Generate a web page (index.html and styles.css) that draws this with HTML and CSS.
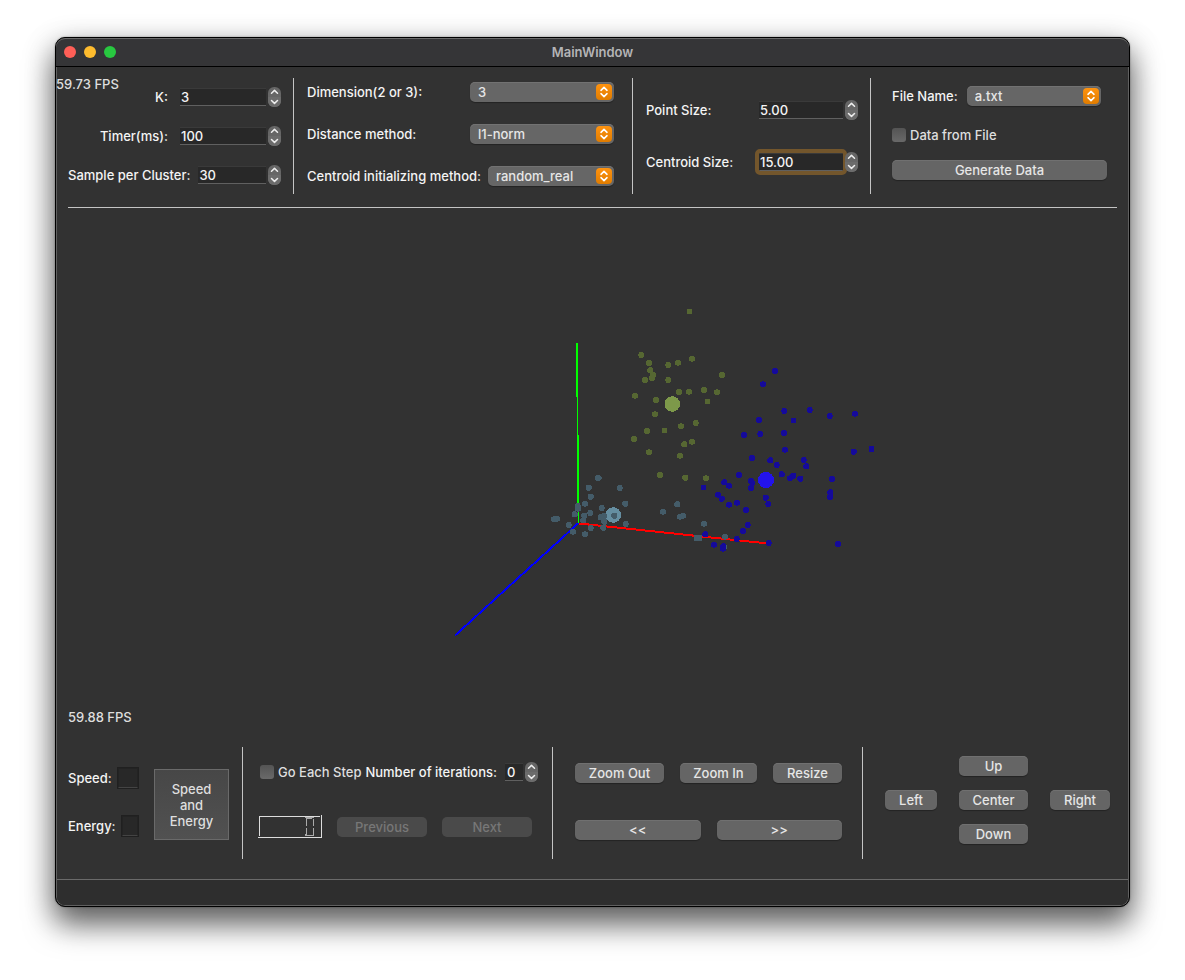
FILE: index.html
```html
<!DOCTYPE html>
<html lang="en">
<head>
<meta charset="utf-8">
<title>MainWindow</title>
<link rel="stylesheet" href="styles.css">
</head>
<body>
<svg class="defs" width="0" height="0" aria-hidden="true">
  <symbol id="updown" viewBox="0 0 16 16"><path d="M5 6.3 8 3.4l3 2.9M5 9.7l3 2.9 3-2.9" fill="none" stroke="#fff" stroke-width="1.6" stroke-linecap="round" stroke-linejoin="round"/></symbol>
  <symbol id="up" viewBox="0 0 13 10"><path d="M3.5 6.3 6.5 3.4l3 2.9" fill="none" stroke="#eee" stroke-width="1.5" stroke-linecap="round" stroke-linejoin="round"/></symbol>
  <symbol id="down" viewBox="0 0 13 10"><path d="M3.5 3.5l3 2.9 3-2.9" fill="none" stroke="#eee" stroke-width="1.5" stroke-linecap="round" stroke-linejoin="round"/></symbol>
</svg>
<main class="window">
  <header class="titlebar">
    <div class="lights"><button class="light red" aria-label="Close"></button><button class="light yellow" aria-label="Minimize"></button><button class="light green" aria-label="Zoom"></button></div>
    <h1 class="title">MainWindow</h1>
  </header>

  <div class="content">
    <span class="fps fps-overlay">59.73 FPS</span>
    <section class="panel top-panel">
      <div class="group counts">
        <div class="row"><label for="k">K:</label><input class="field" id="k" type="text" value="3"><span class="stepper"><button aria-label="Increase K"><svg><use href="#up"/></svg></button><button aria-label="Decrease K"><svg><use href="#down"/></svg></button></span></div>
        <div class="row"><label for="timer">Timer(ms):</label><input class="field" id="timer" type="text" value="100"><span class="stepper"><button aria-label="Increase timer"><svg><use href="#up"/></svg></button><button aria-label="Decrease timer"><svg><use href="#down"/></svg></button></span></div>
        <div class="row"><label for="sample">Sample per Cluster:</label><input class="field fill" id="sample" type="text" value="30"><span class="stepper"><button aria-label="Increase samples"><svg><use href="#up"/></svg></button><button aria-label="Decrease samples"><svg><use href="#down"/></svg></button></span></div>
      </div>
      <div class="group methods">
        <div class="row"><label for="dim">Dimension(2 or 3):</label><span class="combo"><select id="dim"><option>3</option><option>2</option></select><svg class="knob"><use href="#updown"/></svg></span></div>
        <div class="row"><label for="dist">Distance method:</label><span class="combo"><select id="dist"><option>l1-norm</option></select><svg class="knob"><use href="#updown"/></svg></span></div>
        <div class="row"><label for="init">Centroid initializing method:</label><span class="combo narrow"><select id="init"><option>random_real</option></select><svg class="knob"><use href="#updown"/></svg></span></div>
      </div>
      <div class="group sizes">
        <div class="row"><label for="psize">Point Size:</label><input class="field" id="psize" type="text" value="5.00"><span class="stepper"><button aria-label="Increase point size"><svg><use href="#up"/></svg></button><button aria-label="Decrease point size"><svg><use href="#down"/></svg></button></span></div>
        <div class="row"><label for="csize">Centroid Size:</label><input class="field active" id="csize" type="text" value="15.00"><span class="stepper"><button aria-label="Increase centroid size"><svg><use href="#up"/></svg></button><button aria-label="Decrease centroid size"><svg><use href="#down"/></svg></button></span></div>
      </div>
      <div class="group source">
        <div class="row"><label for="file">File Name:</label><span class="combo"><select id="file"><option>a.txt</option></select><svg class="knob"><use href="#updown"/></svg></span></div>
        <div class="row check"><input type="checkbox" id="fromfile"><label for="fromfile">Data from File</label></div>
        <button class="btn">Generate Data</button>
      </div>
    </section>

    <section class="view">
      <svg class="plot" viewBox="68 208 1049 501" role="img" aria-label="3D cluster plot">
        <g shape-rendering="crispEdges" fill="none" stroke-linecap="round">
          <path fill="#00ff00" d="M576 343h2v54h-2zM577 397h1v38h-1zM577 435h2v68h-2zM578 503h1v20h-1z"/>
          <path stroke="#ff0000" stroke-width="2" d="M579 523.500 768 543.500"/>
          <path stroke="#0000ff" stroke-width="2" d="M578 523.500 455.500 635"/>
          <path stroke="#658ea1" stroke-width="15.500" d="M613.300 515h0"/>
          <path stroke="#445c69" stroke-width="6" d="M598 478h.6M588.700 487.700h0M619.700 488h0M590.700 496.700h0M585 503.700h0M625.300 503.700h0M577.700 506h0M578 508.700h0M601.700 508h0M574.700 514.300h0M590.300 513h0M584.300 515.700h0M583.300 520.300h0M554 519.300h0M557 518.700h0M568.700 525h0M573 531.700h0M585 534.300h0M590.700 528h0M600.700 517.300h0M604.300 516h0M604.300 521.700h0M603.300 527.700h0M625.700 524h0M614.300 515.700h0M663 511.700h0M677.300 504.300h0M680 516.700h0M683 515.700h0M704 523.700h0M725 536.700h0M724 547h0"/>
          <path fill="#445c69" d="M694 535h8v6h-8z"/>
          <path stroke="#566732" stroke-width="6" d="M641.300 355h0M649 363h0M650.300 370.300h0M653 375h0M652 378.300h0M645 380h0M668.300 365h0M678 362.700h0M692 358.700h0M668.300 380h0M722 375h0M679 392h0M689 391.700h0M704 390h0M717 392.300h0M635 395.700h0M656 400h0M655 414.300h0M695.700 423h0M681 426.300h0M647 431h0M634 439h0M692 441.700h0M684.300 444.300h0M680 455.700h0M649 452.300h0M660 475h0M685.300 477.700h0M706 478.300h0"/>
          <path fill="#566732" d="M687 309h5v5h-5zM705 399h5v5h-5zM662 428h5v5h-5z"/>
          <path stroke="#7d994a" stroke-width="15.500" d="M672.300 404h0"/>
          <path stroke="#150a9b" stroke-width="6" d="M775 371h0M763 384.300h0M784.300 411h0M809.700 410h0M829.700 416h0M855 413.700h0M759 420h0M744 435h0M760.300 434h0M784 433h0M785 449.700h0M853.700 451.700h0M752 458h0M770.300 460.300h0M776.700 465h0M803.700 460h0M806.300 466.300h0M781.700 474.300h0M793.300 475.700h0M790 478.300h0M800.300 478.700h0M739 475h0M724.300 482.300h0M729 485.700h0M751 481h0M752.300 483h0M751 488h0M832 479h0M830.300 492.300h0M830 497.300h0M718 494.700h0M721.700 498.700h0M765.700 497.700h0M768.300 504h0M729 504.700h0M737 502.700h0M746 510h0M747.700 525h0M743 531h0M705.300 534.300h0M736.700 539h0M768.700 543h0M714 544.700h0M723.300 546.300h0M723 548.700h0M838 544h0"/>
          <path fill="#150a9b" d="M791 418h5v5h-5zM869 446h5v6h-5zM701 485h5v5h-5z"/>
          <path stroke="#2313ec" stroke-width="16" d="M766 480h0"/>
        </g>
      </svg>
      <span class="fps">59.88 FPS</span>
    </section>

    <section class="panel bottom-panel">
      <div class="group stats">
        <div class="readouts">
          <div class="row"><label for="speed">Speed:</label><input class="readout" id="speed" type="text" readonly></div>
          <div class="row"><label for="energy">Energy:</label><input class="readout" id="energy" type="text" readonly></div>
        </div>
        <button class="tile">Speed<br>and<br>Energy</button>
      </div>
      <div class="group steps">
        <div class="row"><span class="check"><input type="checkbox" id="step"><label for="step">Go Each Step</label></span><label class="iter-label" for="iter">Number of iterations:</label><input class="field tiny" id="iter" type="text" value="0"><span class="stepper"><button aria-label="Increase iterations"><svg><use href="#up"/></svg></button><button aria-label="Decrease iterations"><svg><use href="#down"/></svg></button></span></div>
        <div class="row nav">
          <svg class="lcd" viewBox="0 0 64 22" role="img" aria-label="Step 0"><g fill="none" stroke="#ddd" shape-rendering="crispEdges"><path d="M1.500 20V.5H62M0 21.500H63.500V-1"/><path stroke="#aaa" d="M47 1.500h9M48 2.500h6M48.500 3v7M55.500 3v7M48.500 12v7M55.500 12v7M47 19.500h9M47.500 18v1"/></g></svg>
          <button class="btn" disabled>Previous</button><button class="btn" disabled>Next</button>
        </div>
      </div>
      <div class="group zooms">
        <div class="row zoom-row"><button class="btn">Zoom Out</button><button class="btn">Zoom In</button><button class="btn">Resize</button></div>
        <div class="row even"><button class="btn">&lt;&lt;</button><button class="btn">&gt;&gt;</button></div>
      </div>
      <div class="group pad">
        <button class="btn">Left</button>
        <div class="pad-middle"><button class="btn">Up</button><button class="btn">Center</button><button class="btn">Down</button></div>
        <button class="btn">Right</button>
      </div>
    </section>
  </div>
  <footer class="statusbar"></footer>
</main>
</body>
</html>
```
FILE: styles.css
```css
* { box-sizing: border-box; }
body {
  margin: 0;
  min-height: 100vh;
  padding: 37px 55px 73px;
  display: flex;
  background: #fff;
  color: #f4f4f4;
  font: 500 13px/16px Inter, "Liberation Sans", sans-serif;
}
button, input, select { font: inherit; color: inherit; margin: 0; padding: 0; border: 0; }
.defs { position: absolute; }
.window {
  flex: 1;
  min-width: 0;
  display: flex;
  flex-direction: column;
  background: #323232;
  border: 1px solid #000;
  border-radius: 10px;
  overflow: hidden;
  box-shadow: inset 0 0 0 1px #606060, 0 0 2px rgba(0, 0, 0, .4), 0 18px 30px rgba(0, 0, 0, .5), 0 8px 30px rgba(0, 0, 0, .3);
}
.titlebar {
  display: grid;
  grid-template-columns: 1fr auto 1fr;
  align-items: center;
  height: 29px;
  background: #353537;
  border-bottom: 1px solid #000;
  border-radius: 9px 9px 0 0;
  box-shadow: inset 0 1px 0 #6a6a6a;
}
.lights { display: flex; gap: 8px; padding-left: 8px; }
.light { width: 12px; height: 12px; border-radius: 50%; }
.red { background: #ff5f57; }
.yellow { background: #febc2e; }
.green { background: #28c840; }
.title { margin: 0; font-size: 13px; font-weight: 600; color: #b4b4b6; }

.content { flex: 1; position: relative; display: flex; flex-direction: column; padding: 11px 12px 20px; }
.fps { color: #dedede; }
.fps-overlay { position: absolute; left: 0; top: 9px; }
.panel { display: grid; }
.top-panel { grid-template-columns: 225fr 339fr 238fr 247fr; padding-bottom: 13px; border-bottom: 1px solid #c4c4c4; }
.bottom-panel { grid-template-columns: 174fr 310fr 310fr 255fr; }
.group { display: flex; flex-direction: column; min-width: 0; }
.group + .group { border-left: 1px solid #c4c4c4; }
.top-panel .group { min-height: 116px; }
.bottom-panel .group { min-height: 112px; }
.row { display: flex; align-items: center; min-height: 20px; }
label { white-space: nowrap; }

.counts { justify-content: center; gap: 19px; padding-right: 12px; }
.counts label { margin-left: auto; margin-right: 12px; }
.counts .row:last-child label { margin: 0 8px 0 0; }
.methods { gap: 22px; padding: 4px 18px 0 13px; }
.methods .row { justify-content: space-between; }
.sizes { justify-content: center; gap: 32px; padding: 0 12px 0 13px; }
.sizes label { flex: 1; }
.sizes .field { width: 84px; }
.source { padding: 8px 10px 0 21px; }
.source .row:first-child { gap: 9px; margin-bottom: 19px; }
.source .check { margin-bottom: 15px; }
.source .combo { width: 134px; }

.field {
  width: 86px;
  min-width: 0;
  height: 18px;
  padding-left: 1px;
  background: #282828;
  border-top: 1px solid #3a3a3a;
  border-bottom: 1px solid #606060;
  outline: 0;
}
.field.fill { flex: 1; }
.field.tiny { width: 18px; padding-left: 2px; }
.field.active { outline: 4px solid #73562c; border-radius: 1px; }
.stepper {
  display: flex;
  flex-direction: column;
  width: 13px;
  height: 20px;
  margin-left: 2px;
  border-radius: 6px;
  background: #666;
  overflow: hidden;
}
.stepper button { height: 10px; background: none; }
.stepper button + button { background: #6c6c6c; }
.stepper svg { display: block; width: 13px; height: 10px; }

.combo { position: relative; width: 144px; }
.combo.narrow { width: 126px; }
.combo select {
  display: block;
  appearance: none;
  width: 100%;
  height: 20px;
  padding-left: 8px;
  background: #666;
  color: #e6e6e6;
  border-radius: 5px;
  box-shadow: inset 0 1px 0 #727272, 0 1px 1px rgba(0, 0, 0, .3);
}
.knob {
  position: absolute;
  right: 2px;
  top: 2px;
  width: 16px;
  height: 16px;
  border-radius: 4px;
  background: linear-gradient(#ff930f, #e07c00);
}
.check { display: flex; align-items: center; gap: 4px; color: #dedede; }
input[type="checkbox"] {
  appearance: none;
  width: 14px;
  height: 14px;
  border-radius: 3px;
  background: linear-gradient(#545454, #696969);
}
.btn {
  height: 20px;
  border-radius: 5px;
  background: #656565;
  color: #e6e6e6;
  box-shadow: inset 0 1px 0 #707070, 0 1px 1px rgba(0, 0, 0, .3);
}
.btn:disabled { background: #4a4a4a; color: #777; box-shadow: none; }

.view { flex: 1; display: flex; flex-direction: column; min-height: 0; margin-bottom: 22px; }
.plot { display: block; flex: 1; min-height: 0; width: 100%; }

.stats.group { flex-direction: row; gap: 15px; padding: 20px 13px 0 0; }
.readouts { flex: 1; display: flex; flex-direction: column; gap: 26px; min-width: 0; }
.readouts .row { gap: 5px; }
.readout { flex: 1; min-width: 0; width: 0; height: 22px; background: #282828; border: 2px solid #232323; border-bottom-color: #444; outline: 1px solid #202020; outline-offset: -1px; }
.tile {
  width: 75px;
  height: 71px;
  margin-top: 2px;
  background: linear-gradient(#474747, #515151);
  border: 1px solid #6a6a6a;
  color: #dedede;
}
.steps { gap: 34px; padding: 15px 14px 0 16px; }
.steps .check { padding-left: 1px; }
.iter-label { margin-left: 4px; margin-right: auto; }
.nav { gap: 15px; padding-right: 6px; }
.nav .btn { flex: 1; }
.lcd { width: 64px; height: 22px; margin-left: -1px; overflow: visible; }
.zooms { gap: 37px; padding: 16px 20px 0 22px; }
.zooms .row { display: grid; gap: 16px; }
.zoom-row { grid-template-columns: 89fr 77fr 69fr; }
.even { grid-template-columns: 1fr 1fr; }
.pad.group { display: grid; grid-template-columns: 52fr 69fr 60fr; column-gap: 22px; align-items: center; padding: 0 7px 6px 22px; }
.pad-middle { display: grid; gap: 14px; }

.statusbar { height: 26px; margin: 0 1px 1px; background: #2e2e2e; border-top: 1px solid #6a6a6a; border-radius: 0 0 8px 8px; }
```
